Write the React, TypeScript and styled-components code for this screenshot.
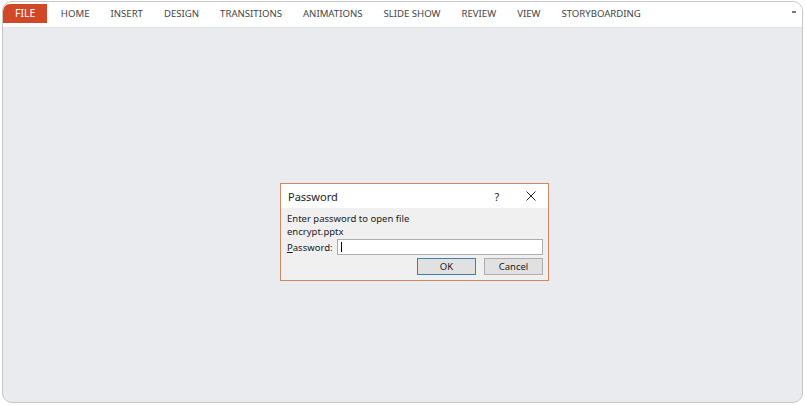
import React from 'react';
import styled, { createGlobalStyle } from 'styled-components';

const Global = createGlobalStyle`
  html, body { margin: 0; padding: 0; background: #ffffff; }
  body { font-family: "Noto Sans", "Open Sans", sans-serif; }
`;

const Frame = styled.div`
  width: 805px;
  height: 405px;
  padding: 1px 2px 4px 2px;
  box-sizing: border-box;
  background: #ffffff;
`;

const Window = styled.div`
  height: 100%;
  border: 1px solid #c6c6c6;
  border-radius: 10px;
  overflow: hidden;
  display: flex;
  flex-direction: column;
  background: #e9ebef;
  position: relative;
`;

const Ribbon = styled.div`
  height: 26px;
  background: #ffffff;
  display: flex;
  align-items: flex-start;
  padding-top: 2px;
  box-sizing: border-box;
  border-bottom: 1px solid #e2e4e8;
`;

const Tab = styled.div<{ $active?: boolean }>`
  height: 19px;
  padding: 0 ${p => (p.$active ? '12px' : '10.5px')};
  margin-right: ${p => (p.$active ? '3px' : '0')};
  font-size: ${p => (p.$active ? '10.5px' : '9.6px')};
  line-height: 19px;
  color: ${p => (p.$active ? '#ffffff' : '#444444')};
  background: ${p => (p.$active ? '#d24726' : 'transparent')};
  border-top-left-radius: ${p => (p.$active ? '7px' : '0')};
`;

const Collapse = styled.div`
  position: absolute;
  right: 6px;
  top: 9px;
  width: 4px;
  height: 2px;
  background: #777777;
`;

const Stage = styled.div`
  flex: 1;
  display: flex;
  align-items: flex-start;
  justify-content: flex-start;
  padding: 155px 0 0 277px;
`;

const Dialog = styled.div`
  width: 267px;
  border: 1px solid #d08a63;
  background: #f0f0f0;
  display: flex;
  flex-direction: column;
  font-size: 9.5px;
  color: #1a1a1a;
`;

const TitleBar = styled.div`
  height: 24px;
  background: #ffffff;
  display: flex;
  align-items: center;
  padding-left: 7px;
`;

const Title = styled.div`
  flex: 1;
  font-size: 11px;
  color: #222222;
`;

const TitleButton = styled.div`
  width: 34px;
  height: 24px;
  display: flex;
  align-items: center;
  justify-content: center;
  font-size: 11px;
  color: #222222;
`;

const Body = styled.div`
  padding: 4px 5px 5px 5px;
  display: flex;
  flex-direction: column;
`;

const Line = styled.div`
  line-height: 13px;
  padding-left: 1px;
`;

const FieldRow = styled.div`
  display: flex;
  align-items: center;
  margin-top: 1px;
`;

const Label = styled.div`
  width: 50px;
  padding-left: 1px;
  u { text-decoration: underline; }
`;

const Input = styled.div`
  flex: 1;
  height: 14px;
  background: #ffffff;
  border: 1px solid #adadad;
  display: flex;
  align-items: center;
  padding-left: 3px;
`;

const Caret = styled.div`
  width: 1px;
  height: 10px;
  background: #000000;
`;

const Buttons = styled.div`
  display: flex;
  justify-content: flex-end;
  gap: 8px;
  margin-top: 3px;
`;

const Button = styled.div<{ $default?: boolean }>`
  width: 57px;
  height: 15px;
  border: 1px solid ${p => (p.$default ? '#3c7fb1' : '#adadad')};
  background: #e1e1e1;
  display: flex;
  align-items: center;
  justify-content: center;
  font-size: 9.5px;
  color: #1a1a1a;
`;

const tabs = ['HOME', 'INSERT', 'DESIGN', 'TRANSITIONS', 'ANIMATIONS', 'SLIDE SHOW', 'REVIEW', 'VIEW', 'STORYBOARDING'];

export default function App() {
  return (
    <Frame>
      <Global />
      <Window>
        <Ribbon>
          <Tab $active>FILE</Tab>
          {tabs.map(t => (
            <Tab key={t}>{t}</Tab>
          ))}
        </Ribbon>
        <Collapse />
        <Stage>
          <Dialog>
            <TitleBar>
              <Title>Password</Title>
              <TitleButton>?</TitleButton>
              <TitleButton>
                <svg width="10" height="10" viewBox="0 0 10 10">
                  <path d="M0.5 0.5 L9.5 9.5 M9.5 0.5 L0.5 9.5" stroke="#222" strokeWidth="1" />
                </svg>
              </TitleButton>
            </TitleBar>
            <Body>
              <Line>Enter password to open file</Line>
              <Line>encrypt.pptx</Line>
              <FieldRow>
                <Label><u>P</u>assword:</Label>
                <Input><Caret /></Input>
              </FieldRow>
              <Buttons>
                <Button $default>OK</Button>
                <Button>Cancel</Button>
              </Buttons>
            </Body>
          </Dialog>
        </Stage>
      </Window>
    </Frame>
  );
}
